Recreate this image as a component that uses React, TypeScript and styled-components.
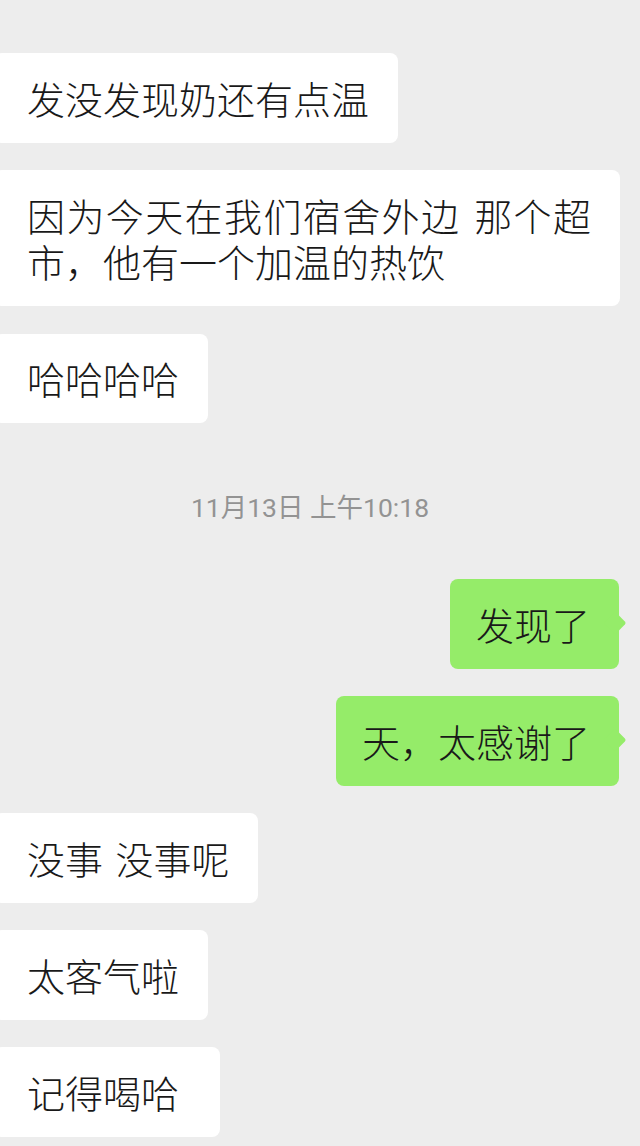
import React from 'react';
import styled, { createGlobalStyle } from 'styled-components';

type Message = {
  text?: string;
  mine?: boolean;
  time?: string;
};

const messages: Message[] = [
  { text: '发没发现奶还有点温' },
  { text: '因为今天在我们宿舍外边 那个超市，他有一个加温的热饮' },
  { text: '哈哈哈哈' },
  { time: '11月13日 上午10:18' },
  { text: '发现了', mine: true },
  { text: '天，太感谢了', mine: true },
  { text: '没事 没事呢' },
  { text: '太客气啦' },
  { text: '记得喝哈\u00a0' },
];

const GlobalStyle = createGlobalStyle`
  html, body {
    margin: 0;
    padding: 0;
    background: #ededed;
    overflow: hidden;
  }
  body {
    font-family: "Noto Sans CJK SC", "Noto Sans", sans-serif;
    color: #191919;
  }
  * {
    box-sizing: border-box;
  }
`;

export default () => {
  return <>
    <GlobalStyle />
    <Chat>
      {messages.map((m, i) => m.time
        ? <TimeStamp key={i}>{m.time}</TimeStamp>
        : <Row key={i} $mine={!!m.mine}>
            <Bubble $mine={!!m.mine}>{m.text}</Bubble>
          </Row>
      )}
    </Chat>
  </>;
};

const Chat = styled.div`
  display: flex;
  flex-direction: column;
  gap: 27.5px;
  padding-top: 53px;
  width: 640px;
`;

const Row = styled.div<{ $mine: boolean }>`
  display: flex;
  justify-content: ${p => p.$mine ? 'flex-end' : 'flex-start'};
  padding-right: ${p => p.$mine ? '21px' : '0'};
`;

const Bubble = styled.div<{ $mine: boolean }>`
  position: relative;
  max-width: 626px;
  margin-left: ${p => p.$mine ? '0' : '-6px'};
  padding: 21.5px 29px 21.5px ${p => p.$mine ? '26px' : '33px'};
  background: ${p => p.$mine ? '#95ec69' : '#ffffff'};
  border-radius: 8px;
  font-size: 38px;
  font-weight: 300;
  line-height: 46.5px;
  word-spacing: 4px;
  text-align: justify;

  &::after {
    content: '';
    display: ${p => p.$mine ? 'block' : 'none'};
    position: absolute;
    right: -4px;
    top: 36px;
    width: 16px;
    height: 16px;
    background: #95ec69;
    border-radius: 2px;
    transform: rotate(45deg);
  }
`;

const TimeStamp = styled.div`
  padding: 39.5px 20px 25.5px 0;
  text-align: center;
  font-family: "Roboto", "Noto Sans CJK SC", sans-serif;
  font-size: 26.5px;
  line-height: 36px;
  color: #939393;
`;
